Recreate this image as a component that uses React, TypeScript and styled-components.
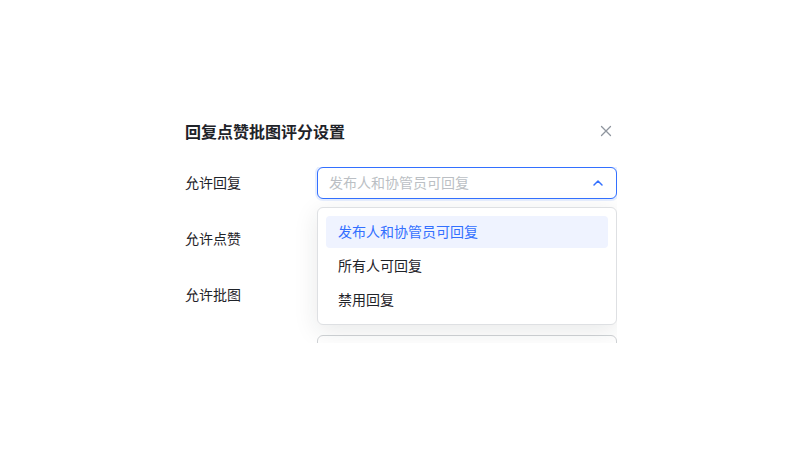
import React, { useState } from 'react';
import styled, { createGlobalStyle } from 'styled-components';

const GlobalStyle = createGlobalStyle`
  body {
    margin: 0;
    background: #ffffff;
    font-family: "Noto Sans CJK SC", "Noto Sans", sans-serif;
    color: #1f2329;
  }
`;

const replyOptions = ['发布人和协管员可回复', '所有人可回复', '禁用回复'];

// the last row sits under the body's fold, so only its select edge shows
const fields = ['允许回复', '允许点赞', '允许批图', ''];

function ChevronUp() {
    return (
        <svg width="12" height="12" viewBox="0 0 12 12" fill="none">
            <path d="M2 8 L6 4 L10 8" stroke="#3370ff" strokeWidth="1.5" strokeLinecap="round" strokeLinejoin="round"/>
        </svg>
    );
}

function CloseIcon() {
    return (
        <svg width="12" height="12" viewBox="0 0 12 12" fill="none">
            <path d="M1.5 1.5 L10.5 10.5 M10.5 1.5 L1.5 10.5" stroke="#8f959e" strokeWidth="1.3" strokeLinecap="round"/>
        </svg>
    );
}

export default function App() {
    const [selected] = useState(0);

    return (
        <S.Page>
            <GlobalStyle/>
            <S.Modal>
                <S.Header>
                    <S.Title>回复点赞批图评分设置</S.Title>
                    <S.CloseButton><CloseIcon/></S.CloseButton>
                </S.Header>
                <S.Body>
                    {fields.map((field, index) => (
                        <S.FormRow key={index}>
                            <S.Label>{field}</S.Label>
                            <S.SelectWrap>
                                <S.Select open={index === 0}>
                                    <S.Placeholder>{index === 0 ? replyOptions[selected] : ''}</S.Placeholder>
                                    {index === 0 && <ChevronUp/>}
                                </S.Select>
                                {index === 0 && (
                                    <S.Dropdown>
                                        {replyOptions.map((option, i) => (
                                            <S.Option key={option} active={i === selected}>{option}</S.Option>
                                        ))}
                                    </S.Dropdown>
                                )}
                            </S.SelectWrap>
                        </S.FormRow>
                    ))}
                </S.Body>
            </S.Modal>
        </S.Page>
    );
}

const S = {
    Page: styled.main`
      width: 800px;
      height: 450px;
      display: flex;
      justify-content: center;
      padding-top: 95px;
      box-sizing: border-box;
      overflow: hidden;
    `,
    Modal: styled.section`
      width: 480px;
      padding: 24px 23px 0 25px;
      box-sizing: border-box;
      background: #ffffff;
      align-self: flex-start;
    `,
    Header: styled.header`
      display: flex;
      align-items: center;
      justify-content: space-between;
      height: 24px;
      margin-bottom: 24px;
    `,
    Title: styled.h2`
      margin: 0;
      font-size: 16px;
      line-height: 24px;
      font-weight: 700;
      color: #1f2329;
    `,
    CloseButton: styled.span`
      display: flex;
      align-items: center;
      justify-content: center;
      width: 24px;
      height: 24px;
      margin-right: -1px;
    `,
    Body: styled.div`
      height: 176px;
      overflow: hidden;
      display: flex;
      flex-direction: column;
      gap: 24px;
    `,
    FormRow: styled.div`
      display: flex;
      align-items: center;
      flex-shrink: 0;
    `,
    Label: styled.label`
      width: 132px;
      flex-shrink: 0;
      font-size: 14px;
      line-height: 20px;
      padding-bottom: 2px;
      color: #1f2329;
    `,
    SelectWrap: styled.div`
      position: relative;
      flex: 1;
    `,
    Select: styled.div<{ open?: boolean }>`
      height: 32px;
      box-sizing: border-box;
      display: flex;
      align-items: center;
      justify-content: space-between;
      padding: 0 12px 0 11px;
      border: 1px solid ${p => p.open ? '#3370ff' : '#d0d3d6'};
      border-radius: 6px;
      box-shadow: ${p => p.open ? '0 0 0 2px rgba(51, 112, 255, 0.12)' : 'none'};
      background: #ffffff;
    `,
    Placeholder: styled.span`
      font-size: 14px;
      line-height: 20px;
      padding-bottom: 2px;
      color: #bbbfc4;
    `,
    Dropdown: styled.ul`
      position: absolute;
      z-index: 10;
      top: 40px;
      left: 0;
      right: 0;
      margin: 0;
      padding: 8px;
      list-style: none;
      display: flex;
      flex-direction: column;
      gap: 2px;
      background: #ffffff;
      border: 1px solid #dee0e3;
      border-radius: 6px;
      box-shadow: 0 6px 24px rgba(31, 35, 41, 0.1);
    `,
    Option: styled.li<{ active?: boolean }>`
      height: 32px;
      display: flex;
      align-items: center;
      padding: 0 12px 2px;
      box-sizing: border-box;
      border-radius: 4px;
      font-size: 14px;
      color: ${p => p.active ? '#3370ff' : '#1f2329'};
      background: ${p => p.active ? '#eff3ff' : 'transparent'};
    `,
};
